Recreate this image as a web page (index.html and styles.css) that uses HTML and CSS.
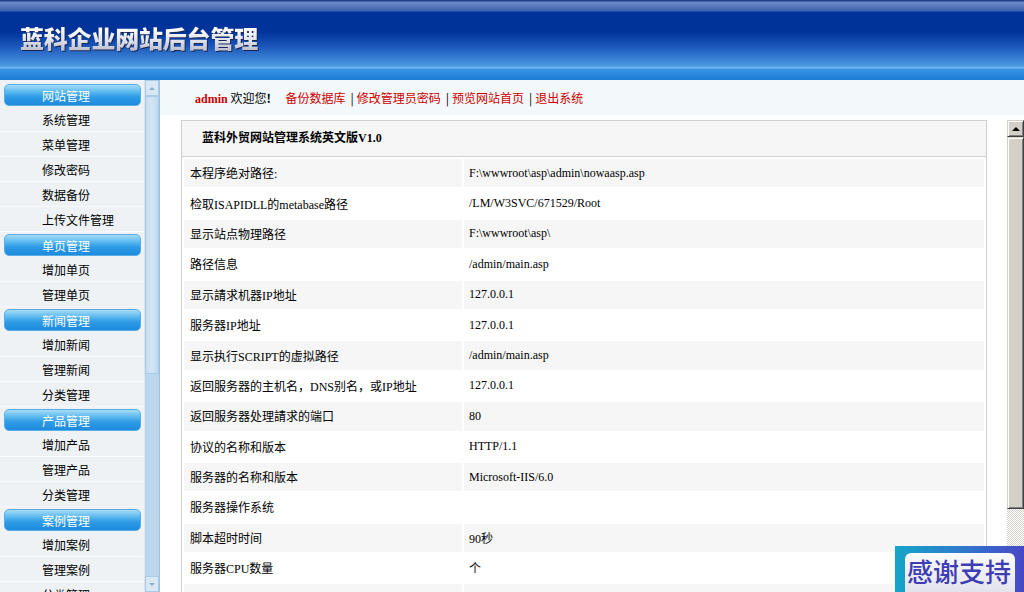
FILE: index.html
```html
<!DOCTYPE html>
<html>
  <head>
    <meta charset="utf-8">
    <title>蓝科企业网站后台管理</title>
    <link rel="stylesheet" href="styles.css">
  </head>
  <body>
    <div class="header">
      <h1 class="logo">蓝科企业网站后台管理</h1>
    </div>

    <div class="frame">
      <!-- left menu -->
      <div class="side">
        <div class="menu">
          <div class="menu-title">网站管理</div>
          <a class="menu-item">系统管理</a>
          <a class="menu-item">菜单管理</a>
          <a class="menu-item">修改密码</a>
          <a class="menu-item">数据备份</a>
          <a class="menu-item">上传文件管理</a>

          <div class="menu-title">单页管理</div>
          <a class="menu-item">增加单页</a>
          <a class="menu-item">管理单页</a>

          <div class="menu-title">新闻管理</div>
          <a class="menu-item">增加新闻</a>
          <a class="menu-item">管理新闻</a>
          <a class="menu-item">分类管理</a>

          <div class="menu-title">产品管理</div>
          <a class="menu-item">增加产品</a>
          <a class="menu-item">管理产品</a>
          <a class="menu-item">分类管理</a>

          <div class="menu-title">案例管理</div>
          <a class="menu-item">增加案例</a>
          <a class="menu-item">管理案例</a>
          <a class="menu-item">分类管理</a>
        </div>
        <div class="side-scroll">
          <span class="side-btn"><i class="tri-up"></i></span>
          <span class="side-thumb"></span>
          <span class="side-track"></span>
          <span class="side-btn"><i class="tri-down"></i></span>
        </div>
      </div>

      <!-- right side -->
      <div class="main">
        <div class="topbar">
          <b class="user">admin</b> 欢迎您<b>!</b>
          <span class="links"><a>备份数据库</a><span class="sep">|</span><a>修改管理员密码</a><span class="sep">|</span><a>预览网站首页</a><span class="sep">|</span><a>退出系统</a></span>
        </div>

        <div class="content">
          <div class="pane">
            <div class="box">
              <div class="box-title">蓝科外贸网站管理系统英文版V1.0</div>
              <table class="info">
                <tr><td class="label">本程序绝对路径:</td><td>F:\wwwroot\asp\admin\nowaasp.asp</td></tr>
                <tr><td class="label">检取ISAPIDLL的metabase路径</td><td>/LM/W3SVC/671529/Root</td></tr>
                <tr><td class="label">显示站点物理路径</td><td>F:\wwwroot\asp\</td></tr>
                <tr><td class="label">路径信息</td><td>/admin/main.asp</td></tr>
                <tr><td class="label">显示請求机器IP地址</td><td>127.0.0.1</td></tr>
                <tr><td class="label">服务器IP地址</td><td>127.0.0.1</td></tr>
                <tr><td class="label">显示执行SCRIPT的虚拟路径</td><td>/admin/main.asp</td></tr>
                <tr><td class="label">返回服务器的主机名，DNS别名，或IP地址</td><td>127.0.0.1</td></tr>
                <tr><td class="label">返回服务器处理請求的端口</td><td>80</td></tr>
                <tr><td class="label">协议的名称和版本</td><td>HTTP/1.1</td></tr>
                <tr><td class="label">服务器的名称和版本</td><td>Microsoft-IIS/6.0</td></tr>
                <tr><td class="label">服务器操作系统</td><td></td></tr>
                <tr><td class="label">脚本超时时间</td><td>90秒</td></tr>
                <tr><td class="label">服务器CPU数量</td><td>个</td></tr>
                <tr><td class="label">服务器解译引擎</td><td>VBScript/5.6</td></tr>
                <tr><td class="label">服务器当前时间</td><td></td></tr>
              </table>
            </div>
          </div>

          <div class="scrollbar">
            <span class="sb-btn"><i class="tri-up dark"></i></span>
            <span class="sb-thumb"></span>
            <span class="sb-track"></span>
            <span class="sb-btn"><i class="tri-down dark"></i></span>
          </div>
        </div>
      </div>
    </div>

    <div class="thanks">
      <div class="thanks-inner">感谢支持</div>
    </div>
  </body>
</html>
```

FILE: styles.css
```css
html, body {
  height: 592px;
  overflow: hidden;
}

body {
  margin: 0;
  color: #000;
  background: #fff;
  font: 12px "Liberation Serif", "Noto Sans CJK SC", serif;
  position: relative;
}

a {
  cursor: pointer;
}

/* header */
.header {
  height: 80px;
  box-sizing: border-box;
  padding: 23px 0 0 20px;
  background: linear-gradient(to bottom,
    #1e3f8c 0, #1e3f8c 1px, #6d8cc8 2px, #3d61ad 11px, #003399 12px,
    #003399 32px, #1a56ba 46px, #4a98e0 66px, #7cbaf0 68px,
    #3a93e2 69px, #1b7dd6 80px);
}

.logo {
  margin: 0;
  display: inline-block;
  font: 900 24px/30px "Noto Sans CJK SC", sans-serif;
  letter-spacing: -0.2px;
  color: transparent;
  background: linear-gradient(to bottom, #ffffff 20%, #dfe1e8 60%, #b4b8c6);
  -webkit-background-clip: text;
  background-clip: text;
  filter: drop-shadow(1px 1px 0 #1a2856);
}

.frame {
  display: flex;
  height: 512px;
}

/* left menu */
.side {
  width: 160px;
  display: flex;
  flex-shrink: 0;
  border-right: 1px solid #9cc3e6;
  box-sizing: border-box;
}

.menu {
  width: 145px;
  padding-top: 2px;
  background: #eef2f5;
  font-family: "Noto Sans CJK SC", sans-serif;
  overflow: hidden;
}

.menu-title {
  height: 22px;
  line-height: 22px;
  margin: 2px 3px 1px 4px;
  padding-left: 37px;
  color: #fff;
  border: 1px solid #5aaee6;
  border-radius: 5px;
  box-sizing: border-box;
  background: linear-gradient(to bottom, #a6dcf8 0, #5ab8ee 35%, #2d9be6 60%, #1f8ade);
}

.menu-item {
  display: block;
  height: 25px;
  line-height: 25px;
  padding-left: 42px;
  color: #000;
  box-sizing: border-box;
  border-bottom: 1px solid #f7f9fa;
  background: #eef2f5;
}

.side-scroll {
  width: 14px;
  display: flex;
  flex-direction: column;
  background: #bcd6ec;
  border-left: 1px solid #d6e6f3;
}

.side-btn {
  height: 16px;
  flex-shrink: 0;
  display: flex;
  align-items: center;
  justify-content: center;
  background: #d8e8f5;
  border: 1px solid #a9c9e4;
  box-sizing: border-box;
}

.side-thumb {
  height: 278px;
  flex-shrink: 0;
  background: linear-gradient(to right, #c6ddf1, #d3e5f4 50%, #c0d9ee);
  border: 1px solid #a9c9e4;
  box-sizing: border-box;
}

.side-track {
  flex: 1;
}

.tri-up,
.tri-down {
  width: 0;
  height: 0;
  border-left: 3px solid transparent;
  border-right: 3px solid transparent;
}

.tri-up {
  border-bottom: 3px solid #8eaecb;
}

.tri-down {
  border-top: 3px solid #8eaecb;
}

.tri-up.dark {
  border-left-width: 4px;
  border-right-width: 4px;
  border-bottom: 4px solid #000;
}

.tri-down.dark {
  border-left-width: 4px;
  border-right-width: 4px;
  border-top: 4px solid #000;
}

/* main */
.main {
  flex: 1;
  display: flex;
  flex-direction: column;
  min-width: 0;
}

.topbar {
  height: 35px;
  line-height: 35px;
  padding-left: 35px;
  margin-bottom: 5px;
  background: #f3f8fa;
  font-family: "Noto Sans CJK SC", sans-serif;
}

.topbar .user {
  color: #c00;
  font-family: "Liberation Serif", serif;
}

.links {
  margin-left: 12px;
}

.links a {
  color: #c00;
}

.links .sep {
  margin: 0 3px 0 5px;
}

.content {
  flex: 1;
  display: flex;
  min-height: 0;
}

.pane {
  flex: 1;
  padding: 0 20px 0 21px;
  overflow: hidden;
}

.box {
  border: 1px solid #cfcfcf;
}

.box-title {
  height: 35px;
  line-height: 35px;
  padding-left: 20px;
  font-weight: bold;
  background: #f6f6f6;
  border-bottom: 1px solid #d2d2d2;
}

.info {
  width: 100%;
  border-spacing: 2px;
}

.info td {
  height: 28.4px;
  padding: 0 0 0 5px;
  background: #f6f6f6;
  vertical-align: middle;
}

.info td.label {
  width: 272px;
  padding-left: 6px;
  font-family: "Liberation Serif", "Noto Sans CJK SC", serif;
}

.info tr:nth-child(even) td {
  background: #fff;
}

/* windows style scrollbar */
.scrollbar {
  width: 17px;
  display: flex;
  flex-direction: column;
  background-color: #fff;
  background-image: repeating-conic-gradient(#d4d0c8 0 25%, #fff 0 50%);
  background-size: 2px 2px;
}

.sb-btn,
.sb-thumb {
  flex-shrink: 0;
  background: #d4d0c8;
  border: 1px solid;
  border-color: #d4d0c8 #404040 #404040 #d4d0c8;
  box-shadow: inset 1px 1px #fff, inset -1px -1px #808080;
  box-sizing: border-box;
}

.sb-btn {
  height: 17px;
  display: flex;
  align-items: center;
  justify-content: center;
}

.sb-thumb {
  height: 372px;
}

.sb-track {
  flex: 1;
}

/* floating thanks badge */
.thanks {
  position: absolute;
  left: 895px;
  top: 546px;
  width: 140px;
  height: 46px;
  box-sizing: border-box;
  padding: 7px 0 0 10px;
  background: linear-gradient(to right, #14a6c8, #2e7ccc 45%, #4b3fc6);
}

.thanks-inner {
  width: 110px;
  height: 50px;
  padding-left: 2px;
  box-sizing: border-box;
  border-radius: 6px;
  background: linear-gradient(to bottom, #fbfbfd, #dcdce8);
  color: #3d3db4;
  font: 500 26px/36px "Noto Sans CJK SC", sans-serif;
  white-space: nowrap;
}
```
